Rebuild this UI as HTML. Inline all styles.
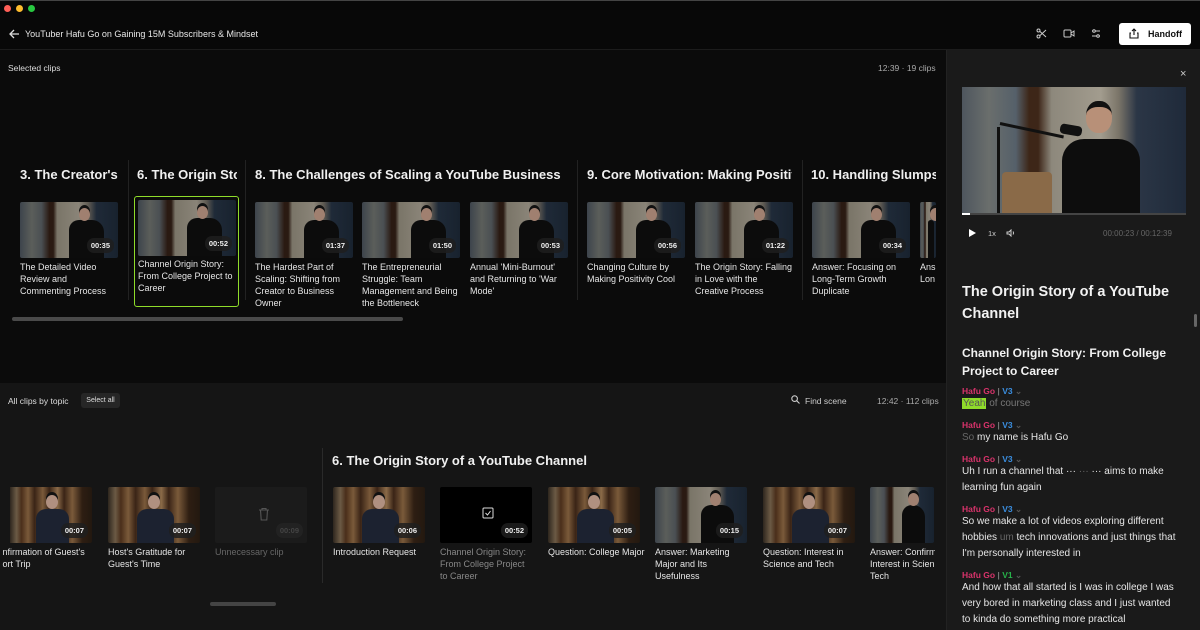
<!DOCTYPE html>
<html><head><meta charset="utf-8">
<style>
*{margin:0;padding:0;box-sizing:border-box}
body{width:1200px;height:630px;overflow:hidden;background:#0b0b0b;font-family:"Liberation Sans",sans-serif;color:#e8e8e8;position:relative}
.a{position:absolute}
.t{font-size:9px;line-height:12px;color:#e6e6e6}
.th{position:absolute;height:56px;border-radius:2px;overflow:hidden}
.g{background:linear-gradient(90deg,#3d444c 0%,#5b5e5a 12%,#4a4f53 22%,#2a1a12 30%,#2a1a12 34%,#7a7568 38%,#8a8478 60%,#5e5a52 70%,#1f2a38 78%,#18222e 100%)}
.h{background:linear-gradient(90deg,#2e261e 0%,#6b5a45 8%,#4a2e1a 14%,#7a5a3a 22%,#3a2416 30%,#7a5a3a 40%,#3a2416 48%,#8a6a48 58%,#3a2416 66%,#7a5a3a 76%,#2e1e12 88%,#221810 100%)}
.g::before{content:"";position:absolute;left:50%;top:18px;width:36%;height:40px;background:#0c0c0c;border-radius:10px 12px 0 0}
.g::after{content:"";position:absolute;left:60%;top:6px;width:11px;height:13px;background:#a08070;border-radius:50%;box-shadow:0 -3px 0 #111}
.h::before{content:"";position:absolute;left:32%;top:22px;width:40%;height:36px;background:#1c2230;border-radius:10px 10px 0 0}
.h::after{content:"";position:absolute;left:44%;top:8px;width:12px;height:14px;background:#b09080;border-radius:50%;box-shadow:0 -3px 0 #111}
.d{position:absolute;right:4px;bottom:5px;background:rgba(30,30,30,.85);color:#eee;font-size:7.5px;padding:3px 4px;border-radius:7px;z-index:2;font-weight:bold}
.sh{font-size:13px;font-weight:bold;color:#f0f0f0;white-space:nowrap;overflow:hidden}
.sep{position:absolute;width:1px;background:#222}
.nm{font-size:8.5px;font-weight:bold;color:#d9336b}
.v3{color:#3a8ee0}.v1{color:#27b24a}
.tr{font-size:10px;line-height:16px;color:#e6e6e6}
</style></head><body>
<div class="a" style="left:0;top:0;width:1200px;height:50px;background:#080808;border-bottom:1px solid #1c1c1c"></div>
<div class="a" style="left:0;top:0;width:1200px;height:1px;background:#444"></div>
<div class="a" style="left:4px;top:5px;width:7px;height:7px;border-radius:50%;background:#ff5f57"></div>
<div class="a" style="left:16px;top:5px;width:7px;height:7px;border-radius:50%;background:#febc2e"></div>
<div class="a" style="left:28px;top:5px;width:7px;height:7px;border-radius:50%;background:#28c840"></div>
<svg class="a" style="left:9px;top:29px" width="11" height="10" viewBox="0 0 11 10"><path d="M10 5H1M5 1L1 5l4 4" stroke="#ddd" stroke-width="1.3" fill="none"/></svg>
<div class="a" style="left:25px;top:29px;font-size:9px;color:#e8e8e8">YouTuber Hafu Go on Gaining 15M Subscribers &amp; Mindset</div>
<svg class="a" style="left:1036px;top:28px" width="11" height="11" viewBox="0 0 11 11" fill="none" stroke="#ccc" stroke-width="1"><circle cx="2.5" cy="2.5" r="1.5"/><circle cx="2.5" cy="8.5" r="1.5"/><path d="M4 3.5L10 9M4 7.5L10 2"/></svg>
<svg class="a" style="left:1063px;top:29px" width="12" height="9" viewBox="0 0 12 9" fill="none" stroke="#ccc" stroke-width="1"><rect x="1" y="1" width="7" height="7" rx="1"/><path d="M8 4l3-2v5l-3-2"/></svg>
<svg class="a" style="left:1091px;top:28px" width="10" height="11" viewBox="0 0 10 11" fill="none" stroke="#ccc" stroke-width="1"><path d="M1 3h8M1 8h8"/><circle cx="3" cy="3" r="1.3" fill="#080808"/><circle cx="7" cy="8" r="1.3" fill="#080808"/></svg>
<div class="a" style="left:1119px;top:23px;width:72px;height:22px;background:#fff;border-radius:3px"></div>
<svg class="a" style="left:1129px;top:28px" width="10" height="11" viewBox="0 0 10 11" fill="none" stroke="#111" stroke-width="1.1"><path d="M5 7V1M3 3l2-2 2 2M2 5H1v5h8V5H8"/></svg>
<div class="a" style="left:1148px;top:29px;font-size:9px;font-weight:bold;color:#111">Handoff</div>

<div class="a" style="left:8px;top:63px;font-size:8.5px;color:#ddd">Selected clips</div>
<div class="a" style="left:878px;top:63px;font-size:8.5px;color:#aaa">12:39 · 19 clips</div>

<div class="sep" style="left:128px;top:160px;height:140px"></div>
<div class="sep" style="left:245px;top:160px;height:140px"></div>
<div class="sep" style="left:577px;top:160px;height:140px"></div>
<div class="sep" style="left:802px;top:160px;height:140px"></div>

<div class="a sh" style="left:20px;top:167px;width:98px">3. The Creator's E</div>
<div class="a sh" style="left:137px;top:167px;width:100px">6. The Origin Stor</div>
<div class="a sh" style="left:255px;top:167px;width:315px">8. The Challenges of Scaling a YouTube Business</div>
<div class="a sh" style="left:587px;top:167px;width:205px">9. Core Motivation: Making Positivit</div>
<div class="a sh" style="left:811px;top:167px;width:125px">10. Handling Slumps a</div>

<div class="a" style="left:134px;top:196px;width:105px;height:111px;border:1.5px solid #8fdc2a;border-radius:3px"></div>

<div class="th g" style="left:20px;top:202px;width:98px"><span class="d">00:35</span></div>
<div class="th g" style="left:138px;top:200px;width:98px"><span class="d">00:52</span></div>
<div class="th g" style="left:255px;top:202px;width:98px"><span class="d">01:37</span></div>
<div class="th g" style="left:362px;top:202px;width:98px"><span class="d">01:50</span></div>
<div class="th g" style="left:470px;top:202px;width:98px"><span class="d">00:53</span></div>
<div class="th g" style="left:587px;top:202px;width:98px"><span class="d">00:56</span></div>
<div class="th g" style="left:695px;top:202px;width:98px"><span class="d">01:22</span></div>
<div class="th g" style="left:812px;top:202px;width:98px"><span class="d">00:34</span></div>
<div class="th g" style="left:920px;top:202px;width:16px"></div>

<div class="a t" style="left:20px;top:261px;width:90px">The Detailed Video Review and Commenting Process</div>
<div class="a t" style="left:138px;top:258px;width:98px">Channel Origin Story: From College Project to Career</div>
<div class="a t" style="left:255px;top:261px;width:92px">The Hardest Part of Scaling: Shifting from Creator to Business Owner</div>
<div class="a t" style="left:362px;top:261px;width:100px">The Entrepreneurial Struggle: Team Management and Being the Bottleneck</div>
<div class="a t" style="left:470px;top:261px;width:88px">Annual 'Mini-Burnout' and Returning to 'War Mode'</div>
<div class="a t" style="left:587px;top:261px;width:98px">Changing Culture by Making Positivity Cool</div>
<div class="a t" style="left:695px;top:261px;width:98px">The Origin Story: Falling in Love with the Creative Process</div>
<div class="a t" style="left:812px;top:261px;width:92px">Answer: Focusing on Long-Term Growth Duplicate</div>
<div class="a t" style="left:920px;top:261px;width:16px;overflow:hidden;white-space:nowrap">Ans<br>Lon</div>
<div class="a" style="left:12px;top:317px;width:391px;height:4px;border-radius:2px;background:#4a4a4a"></div>

<div class="a" style="left:0;top:383px;width:946px;height:247px;background:#151515"></div>
<div class="a" style="left:8px;top:396px;font-size:8.5px;color:#ddd">All clips by topic</div>
<div class="a" style="left:81px;top:393px;width:39px;height:15px;border-radius:3px;background:#262626;font-size:7px;color:#ddd;text-align:center;line-height:15px">Select all</div>
<svg class="a" style="left:791px;top:395px" width="9" height="9" viewBox="0 0 9 9" fill="none" stroke="#ccc" stroke-width="1.1"><circle cx="3.6" cy="3.6" r="2.8"/><path d="M5.8 5.8L8.5 8.5"/></svg>
<div class="a" style="left:805px;top:396px;font-size:8.5px;color:#ccc">Find scene</div>
<div class="a" style="left:877px;top:396px;font-size:8.5px;color:#aaa">12:42 · 112 clips</div>

<div class="sep" style="left:322px;top:448px;height:135px;background:#2a2a2a"></div>
<div class="a" style="left:332px;top:453px;font-size:13px;font-weight:bold;color:#f0f0f0;white-space:nowrap">6. The Origin Story of a YouTube Channel</div>

<div class="th h" style="left:10px;top:487px;width:82px;border-radius:0 2px 2px 0"><span class="d">00:07</span></div>
<div class="th h" style="left:108px;top:487px;width:92px"><span class="d">00:07</span></div>
<div class="th" style="left:215px;top:487px;width:92px;background:#1b1b1b"><span class="d" style="background:#222;color:#444">00:09</span></div>
<svg class="a" style="left:258px;top:507px" width="12" height="14" viewBox="0 0 12 14" fill="none" stroke="#555" stroke-width="1.1"><path d="M1 3h10M4 3V1.5h4V3M2.5 3l.7 10h5.6l.7-10"/></svg>
<div class="th h" style="left:333px;top:487px;width:92px"><span class="d">00:06</span></div>
<div class="th" style="left:440px;top:487px;width:92px;background:#000"><span class="d">00:52</span></div>
<svg class="a" style="left:482px;top:507px" width="12" height="12" viewBox="0 0 12 12" fill="none" stroke="#ddd" stroke-width="1"><rect x="1" y="1" width="10" height="10" rx="1"/><path d="M3.5 6l2 2 3-4"/></svg>
<div class="th h" style="left:548px;top:487px;width:92px"><span class="d">00:05</span></div>
<div class="th g" style="left:655px;top:487px;width:92px"><span class="d">00:15</span></div>
<div class="th h" style="left:763px;top:487px;width:92px"><span class="d">00:07</span></div>
<div class="th g" style="left:870px;top:487px;width:64px"></div>

<div class="a t" style="left:0;top:546px;width:100px;white-space:nowrap;overflow:hidden">&nbsp;nfirmation of Guest's<br>&nbsp;ort Trip</div>
<div class="a t" style="left:108px;top:546px;width:88px">Host's Gratitude for Guest's Time</div>
<div class="a t" style="left:215px;top:546px;width:95px;color:#666">Unnecessary clip</div>
<div class="a t" style="left:333px;top:546px;width:95px">Introduction Request</div>
<div class="a t" style="left:440px;top:546px;width:94px;color:#888">Channel Origin Story: From College Project to Career</div>
<div class="a t" style="left:548px;top:546px;width:100px">Question: College Major</div>
<div class="a t" style="left:655px;top:546px;width:80px">Answer: Marketing Major and Its Usefulness</div>
<div class="a t" style="left:763px;top:546px;width:85px">Question: Interest in Science and Tech</div>
<div class="a t" style="left:870px;top:546px;width:65px;overflow:hidden;white-space:nowrap">Answer: Confirm<br>Interest in Scien<br>Tech</div>
<div class="a" style="left:210px;top:602px;width:66px;height:4px;border-radius:2px;background:#444"></div>

<div class="a" style="left:946px;top:50px;width:254px;height:580px;background:#1a1a1a;border-left:1px solid #222"></div>
<div class="a" style="left:1180px;top:68px;font-size:11px;color:#ccc">×</div>
<div class="a" style="left:962px;top:87px;width:224px;height:127px;overflow:hidden;background:linear-gradient(90deg,#4e565e 0%,#6a6e6c 12%,#55606a 24%,#3d2618 30%,#3d2618 34%,#8d887c 40%,#a29c8e 62%,#7a7468 70%,#2b3646 78%,#1f2a3a 100%)">
 <div class="a" style="left:40px;top:85px;width:50px;height:45px;background:#8a6a48;border-radius:4px"></div>
 <div class="a" style="left:100px;top:52px;width:78px;height:80px;background:#0d0d0d;border-radius:22px 22px 0 0"></div>
 <div class="a" style="left:124px;top:14px;width:26px;height:32px;background:#b89078;border-radius:45%;border-top:6px solid #111"></div>
 <div class="a" style="left:35px;top:40px;width:3px;height:90px;background:#111"></div>
 <div class="a" style="left:38px;top:35px;width:65px;height:3px;background:#111;transform:rotate(12deg);transform-origin:left"></div>
 <div class="a" style="left:98px;top:38px;width:22px;height:10px;background:#111;border-radius:4px;transform:rotate(10deg)"></div>
</div>
<div class="a" style="left:962px;top:213px;width:224px;height:2px;background:#444"></div>
<div class="a" style="left:962px;top:213px;width:8px;height:2px;background:#fff"></div>
<svg class="a" style="left:969px;top:229px" width="7" height="8" viewBox="0 0 7 8"><path d="M0 0L7 4L0 8Z" fill="#fff"/></svg>
<div class="a" style="left:988px;top:229px;font-size:7.5px;color:#ccc">1x</div>
<svg class="a" style="left:1006px;top:229px" width="9" height="8" viewBox="0 0 9 8" fill="none" stroke="#ccc" stroke-width="1"><path d="M1 3h2l2-2v6L3 5H1z M7 2.5q1 1.5 0 3"/></svg>
<div class="a" style="left:1103px;top:229px;font-size:8px;color:#666">00:00:23 / 00:12:39</div>

<div class="a" style="left:962px;top:281px;width:215px;font-size:14.5px;line-height:22px;font-weight:bold;color:#f2f2f2">The Origin Story of a YouTube Channel</div>
<div class="a" style="left:962px;top:344px;width:215px;font-size:12px;line-height:18px;font-weight:bold;color:#f2f2f2">Channel Origin Story: From College Project to Career</div>
<div class="a" style="left:1194px;top:314px;width:3px;height:13px;border-radius:2px;background:#666"></div>

<div class="a nm" style="left:962px;top:386px">Hafu Go <span style="color:#777">|</span> <span class="v3">V3</span> <span style="color:#555">⌄</span></div>
<div class="a tr" style="left:962px;top:396px;color:#777"><span style="background:#8fdc2a;color:#555;padding:0 1px">Yeah</span> of course</div>
<div class="a nm" style="left:962px;top:420px">Hafu Go <span style="color:#777">|</span> <span class="v3">V3</span> <span style="color:#555">⌄</span></div>
<div class="a tr" style="left:962px;top:430px"><span style="color:#666">So</span> my name is Hafu Go</div>
<div class="a nm" style="left:962px;top:454px">Hafu Go <span style="color:#777">|</span> <span class="v3">V3</span> <span style="color:#555">⌄</span></div>
<div class="a tr" style="left:962px;top:464px;width:216px">Uh I run a channel that ··· <span style="color:#666">···</span> ··· aims to make learning fun again</div>
<div class="a nm" style="left:962px;top:504px">Hafu Go <span style="color:#777">|</span> <span class="v3">V3</span> <span style="color:#555">⌄</span></div>
<div class="a tr" style="left:962px;top:514px;width:216px">So we make a lot of videos exploring different hobbies <span style="color:#666">um</span> tech innovations and just things that I'm personally interested in</div>
<div class="a nm" style="left:962px;top:570px">Hafu Go <span style="color:#777">|</span> <span class="v1">V1</span> <span style="color:#555">⌄</span></div>
<div class="a tr" style="left:962px;top:580px;width:216px">And how that all started is I was in college I was very bored in marketing class and I just wanted to kinda do something more practical</div>
</body></html>
